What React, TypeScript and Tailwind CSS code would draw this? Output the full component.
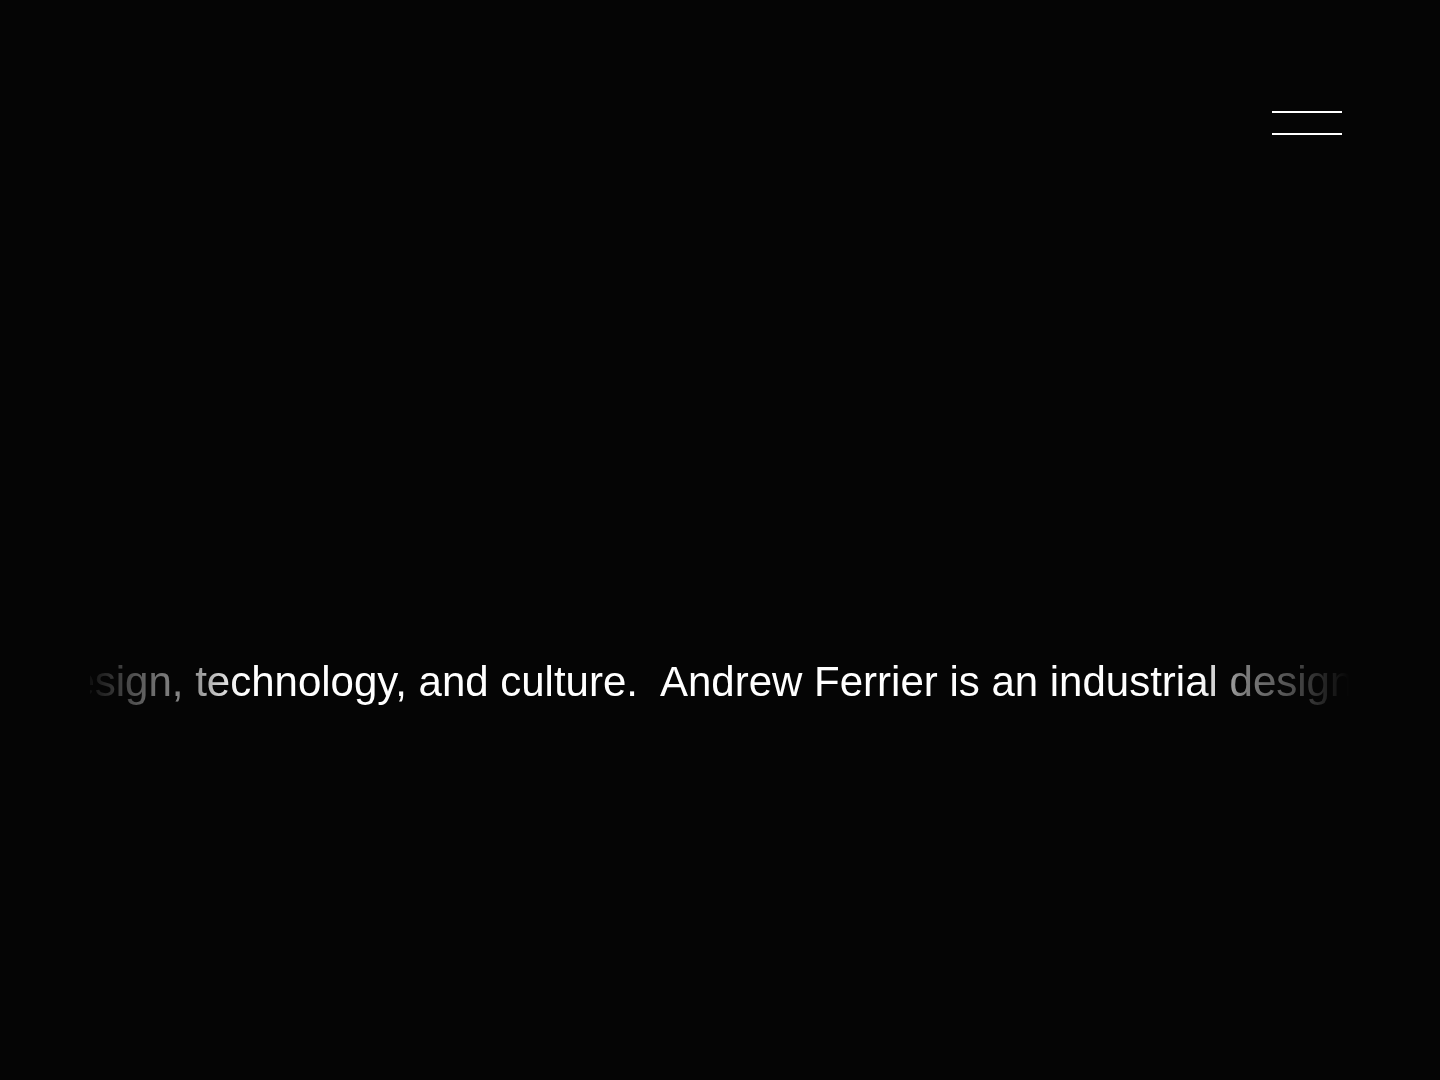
import React from "react";

const SENTENCE =
  "Andrew Ferrier is an industrial designer working at the intersection of design, technology, and culture.";

export default function App() {
  return (
    <div className="min-h-screen w-full bg-[#050505] text-white font-['Liberation_Sans',Arial,sans-serif]">
      <header className="flex justify-end pt-[111px] pr-[98px]">
        <button aria-label="Menu" className="flex flex-col gap-[20px]">
          <span className="block w-[70px] h-[2px] bg-white" />
          <span className="block w-[70px] h-[2px] bg-white" />
        </button>
      </header>
      <section className="mt-[522px] mx-[90px] flex overflow-hidden text-[42px] leading-[50px] whitespace-nowrap [mask-image:linear-gradient(to_right,rgba(0,0,0,0.05)_0px,rgba(0,0,0,0.4)_60px,rgba(0,0,0,0.6)_110px,black_150px,black_calc(100%-150px),rgba(0,0,0,0.5)_calc(100%-110px),rgba(0,0,0,0.3)_calc(100%-60px),transparent_100%)]">
        <div className="w-[570px] shrink-0 flex justify-end overflow-hidden">
          <span className="pr-[22px]">{SENTENCE}</span>
        </div>
        <div className="flex-1 overflow-hidden">
          <span className="pr-[22px]">{SENTENCE}</span>
        </div>
      </section>
    </div>
  );
}
